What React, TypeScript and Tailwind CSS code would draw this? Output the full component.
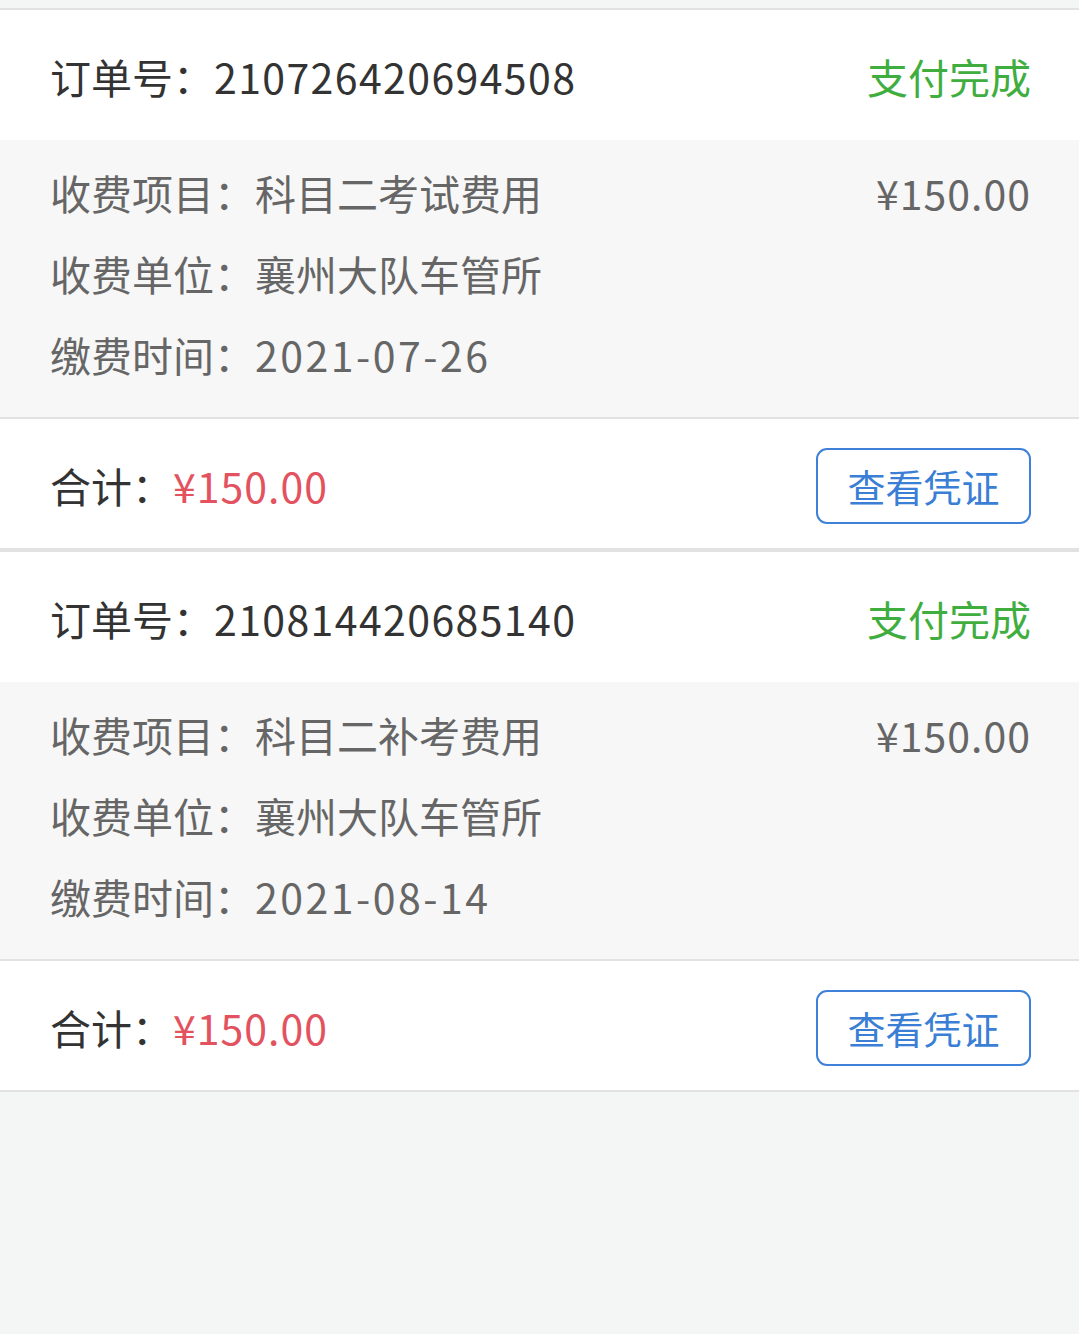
const orders = [
  {
    no: '210726420694508',
    item: '科目二考试费用',
    unit: '襄州大队车管所',
    time: '2021-07-26',
    price: '¥150.00',
  },
  {
    no: '210814420685140',
    item: '科目二补考费用',
    unit: '襄州大队车管所',
    time: '2021-08-14',
    price: '¥150.00',
  },
]

const font = { fontFamily: '"Noto Sans CJK SC", "Noto Sans", sans-serif' }

export default function App() {
  return (
    <div className="min-h-[1334px] bg-[#f4f6f6] pt-[8px]" style={font}>
      {orders.map((o) => (
        <div key={o.no} className="border-y-2 border-[#e2e2e2] bg-white">
          <div className="flex h-[130px] items-center justify-between pl-[50px] pr-[48px] pt-[2px] text-[41px] leading-none">
            <span className="text-[#333]">
              订单号：<span className="tracking-[1.4px]">{o.no}</span>
            </span>
            <span className="text-[#3fae3f]">支付完成</span>
          </div>
          <div className="bg-[#f7f7f7] pb-[22px] pl-[50px] pr-[48px] pt-[12px] text-[41px] text-[#666]">
            <div className="flex h-[81px] items-center justify-between">
              <span>收费项目：{o.item}</span>
              <span className="tracking-[1px]">{o.price}</span>
            </div>
            <div className="flex h-[81px] items-center">
              <span>收费单位：{o.unit}</span>
            </div>
            <div className="flex h-[81px] items-center">
              <span>
                缴费时间：<span className="tracking-[2.5px]">{o.time}</span>
              </span>
            </div>
          </div>
          <div className="flex h-[131px] items-center justify-between border-t-2 border-[#e2e2e2] pl-[50px] pr-[48px] pt-[4px]">
            <span className="text-[41px] text-[#333]">
              合计：<span className="tracking-[1px] text-[#e2525f]">{o.price}</span>
            </span>
            <button className="flex h-[76px] w-[215px] items-center justify-center rounded-[11px] border-2 border-[#3f81d8] text-[38px] text-[#3a7fd5]">
              查看凭证
            </button>
          </div>
        </div>
      ))}
    </div>
  )
}
